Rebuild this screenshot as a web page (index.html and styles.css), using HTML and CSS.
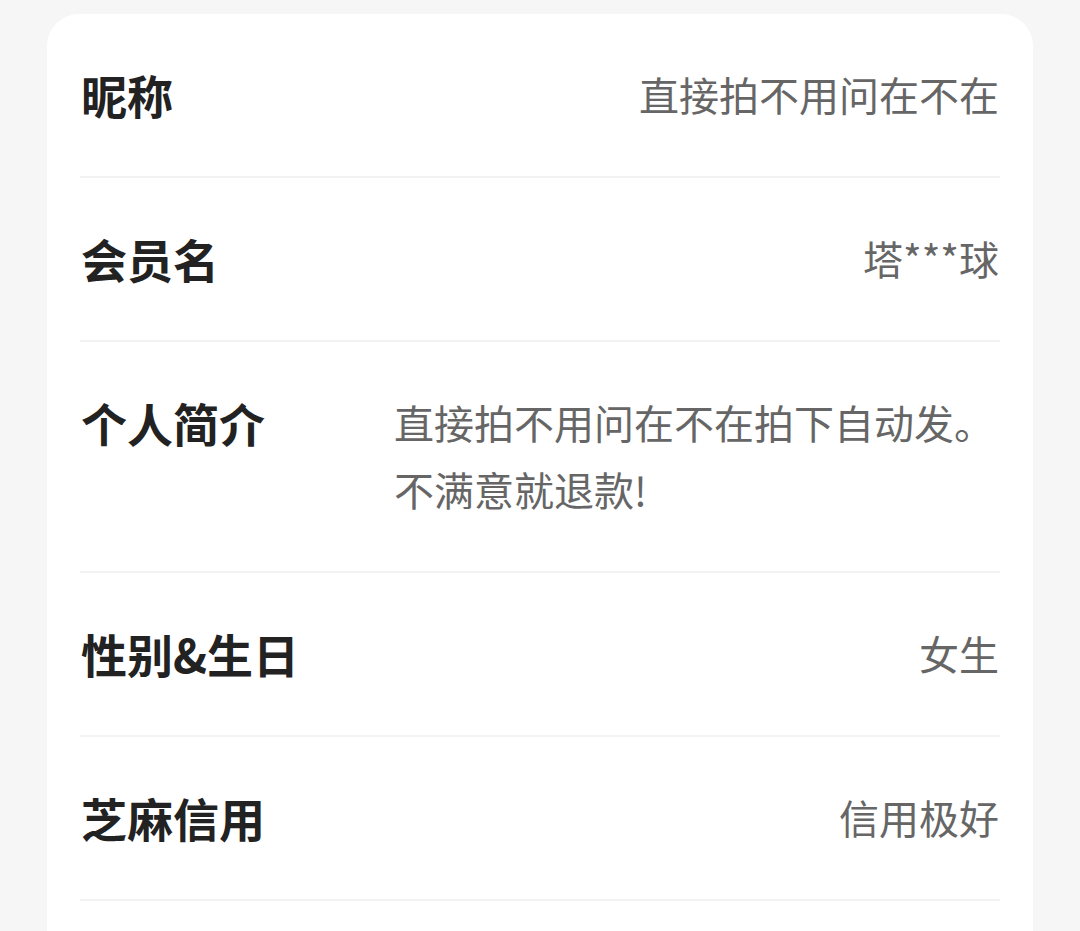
FILE: index.html
```html
<!DOCTYPE html>
<html lang="zh-CN">
<head>
    <meta charset="UTF-8">
    <meta name="viewport" content="width=device-width, initial-scale=1.0">
    <title>个人资料</title>
    <link rel="stylesheet" href="styles.css">
</head>
<body>
    <div class="card">
        <div class="row">
            <div class="label">昵称</div>
            <div class="value">直接拍不用问在不在</div>
        </div>
        <div class="row">
            <div class="label">会员名</div>
            <div class="value">塔***球</div>
        </div>
        <div class="row row-top">
            <div class="label">个人简介</div>
            <div class="value value-block">直接拍不用问在不在拍下自动发。不满意就退款!</div>
        </div>
        <div class="row">
            <div class="label">性别&amp;生日</div>
            <div class="value">女生</div>
        </div>
        <div class="row">
            <div class="label">芝麻信用</div>
            <div class="value">信用极好</div>
        </div>
        <div class="row">
            <div class="label"></div>
            <div class="value"></div>
        </div>
    </div>
</body>
</html>
```

FILE: styles.css
```css
body {
    margin: 0;
    padding: 14px 47px 0;
    background-color: #f6f6f6;
    font-family: "Noto Sans CJK SC", "Noto Sans", sans-serif;
    height: 931px;
    box-sizing: border-box;
    overflow: hidden;
}
.card {
    background-color: #fff;
    border-radius: 32px 32px 0 0;
    padding: 0 33px;
}
.row {
    display: flex;
    align-items: center;
    justify-content: space-between;
    padding: 47px 0 48px;
    border-bottom: 2px solid #f3f3f3;
    line-height: 67px;
    min-height: 67px;
}
.row-top {
    align-items: flex-start;
}
.label {
    flex: none;
    width: 313px;
    padding-left: 1px;
    font-size: 46px;
    font-weight: bold;
    color: #222;
}
.value {
    font-size: 40px;
    color: #666;
    text-align: right;
    white-space: nowrap;
    padding-right: 1px;
}
.value-block {
    flex: 1;
    text-align: left;
    white-space: normal;
}
```
